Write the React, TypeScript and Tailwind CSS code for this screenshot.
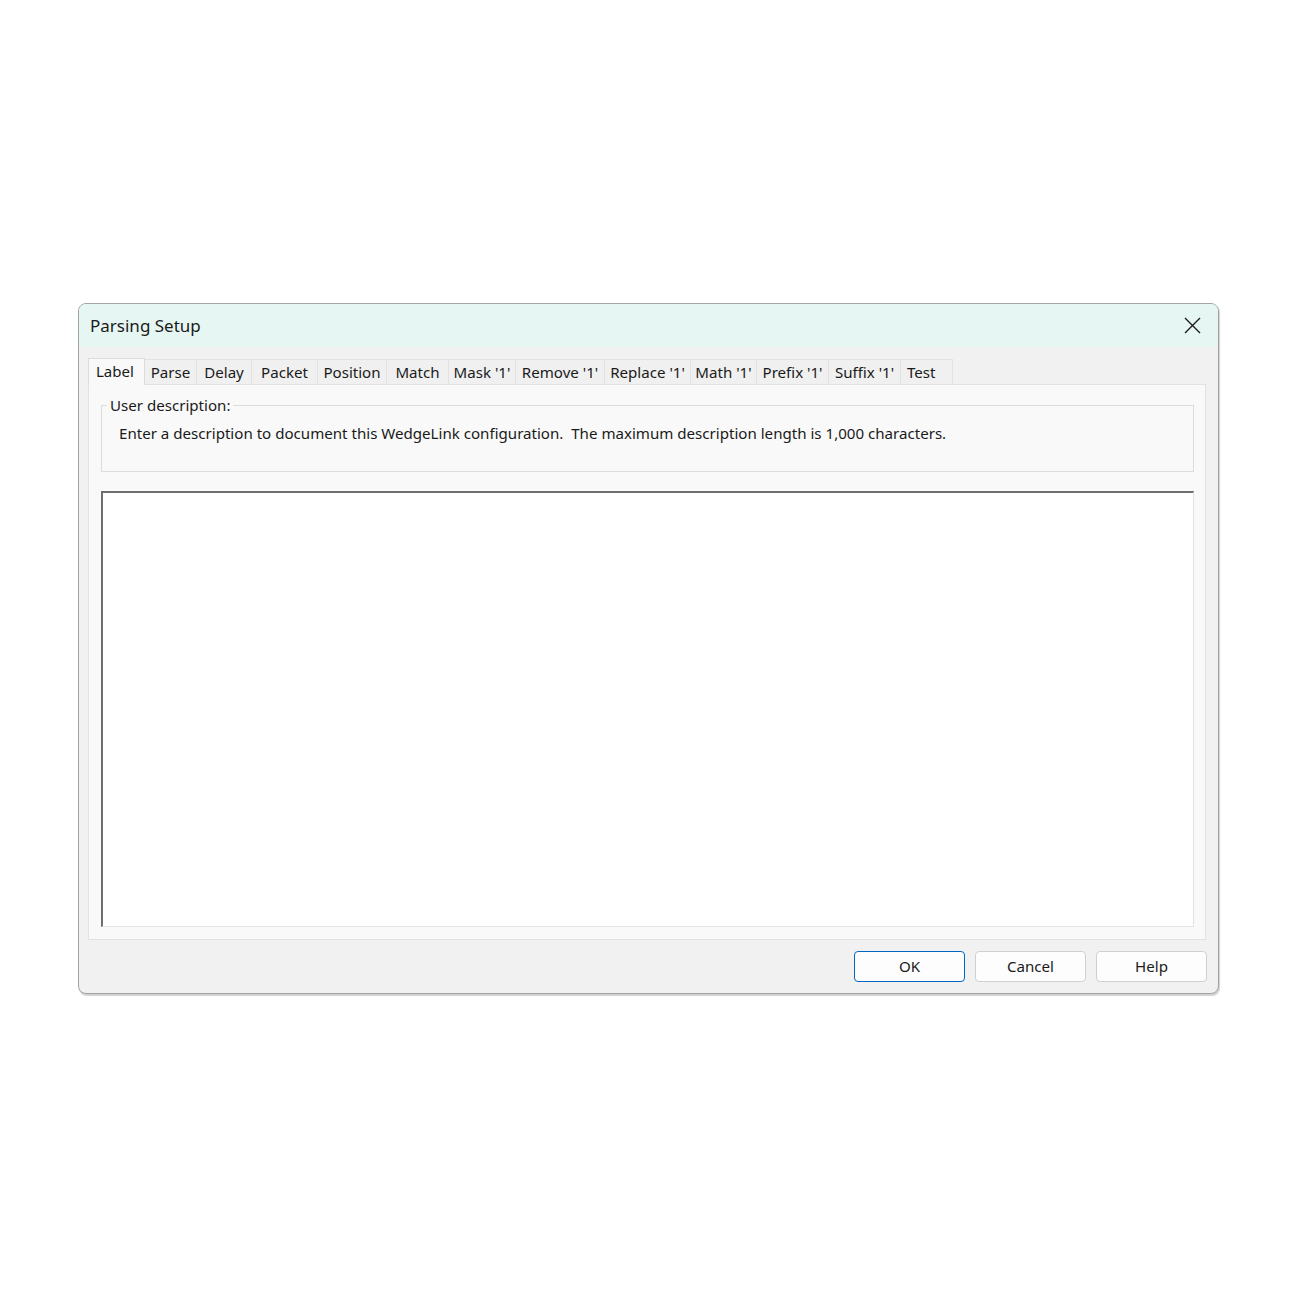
import React from "react";

const tabs: { label: string; w: number }[] = [
  { label: "Parse", w: 52 },
  { label: "Delay", w: 55 },
  { label: "Packet", w: 66 },
  { label: "Position", w: 69 },
  { label: "Match", w: 62 },
  { label: "Mask '1'", w: 67 },
  { label: "Remove '1'", w: 89 },
  { label: "Replace '1'", w: 86 },
  { label: "Math '1'", w: 66 },
  { label: "Prefix '1'", w: 72 },
  { label: "Suffix '1'", w: 72 },
  { label: "Test", w: 52 },
];

export default function App() {
  return (
    <div className="w-[1300px] h-[1300px] bg-white pt-[303px] pl-[78px]" style={{ fontFamily: "'Noto Sans', sans-serif" }}>
      <div className="w-[1141px] h-[691px] rounded-[8px] border border-[#a3a3a3] bg-[#f1f1f1] shadow-[1px_2px_1px_rgba(0,0,0,0.18)] flex flex-col overflow-hidden">
        {/* Title bar */}
        <div className="h-[43px] shrink-0 bg-[#e6f7f3] flex items-center justify-between pl-[11px] pr-[17px]">
          <span className="text-[17px] text-[#1a1a1a] leading-none">Parsing Setup</span>
          <svg width="17" height="17" viewBox="0 0 17 17" className="text-[#1a1a1a]">
            <path d="M1 1 L16 16 M16 1 L1 16" stroke="currentColor" strokeWidth="1.4" />
          </svg>
        </div>
        {/* Body */}
        <div className="flex-1 flex flex-col pl-[9px] pr-[11px]">
          {/* Tabs */}
          <div className="flex items-end h-[37px] shrink-0">
            <div className="w-[57px] h-[27px] bg-[#f9f9f9] border border-b-0 border-[#dcdcdc] flex items-start pt-[1px] pl-[7px] text-[15px] text-[#1a1a1a] relative top-[1px] z-10">
              Label
            </div>
            {tabs.map((t) => (
              <div
                key={t.label}
                style={{ width: t.w }}
                className={
                  "h-[25px] bg-[#f0f0f0] border-t border-r border-[#e2e2e2] flex items-center text-[15.1px] text-[#1a1a1a] leading-none pt-[2px] " +
                  (t.label === "Test" ? "justify-start pl-[6px]" : "justify-center")
                }
              >
                {t.label}
              </div>
            ))}
          </div>
          {/* Panel */}
          <div className="w-[1118px] h-[556px] bg-[#f9f9f9] border border-[#e2e2e2] pl-[12px] pr-[11px] pt-[12px] flex flex-col">
            <div className="relative h-[67px] border border-[#dcdcdc] mt-[8px] shrink-0">
              <span className="absolute -top-[12px] left-[5px] px-[3px] bg-[#f9f9f9] text-[15.1px] text-[#1a1a1a] leading-[22px]">
                User description:
              </span>
              <div className="pt-[16px] pl-[17px] text-[15.1px] text-[#1a1a1a] leading-[22px] whitespace-pre">
                {"Enter a description to document this WedgeLink configuration.  The maximum description length is 1,000 characters."}
              </div>
            </div>
            <div className="mt-[19px] h-[436px] bg-white border-t-2 border-l-2 border-t-[#6e6e6e] border-l-[#6e6e6e] border-r border-b border-r-[#e3e3e3] border-b-[#e3e3e3]"></div>
          </div>
          {/* Buttons */}
          <div className="flex justify-end gap-[10px] mt-[11px]">
            <button className="w-[111px] h-[31px] rounded-[4px] border border-[#0067c0] bg-[#fdfdfd] text-[15.1px] text-[#1a1a1a]">OK</button>
            <button className="w-[111px] h-[31px] rounded-[4px] border border-[#d0d0d0] bg-[#fdfdfd] text-[15.1px] text-[#1a1a1a]">Cancel</button>
            <button className="w-[111px] h-[31px] rounded-[4px] border border-[#d0d0d0] bg-[#fdfdfd] text-[15.1px] text-[#1a1a1a]">Help</button>
          </div>
        </div>
      </div>
    </div>
  );
}
